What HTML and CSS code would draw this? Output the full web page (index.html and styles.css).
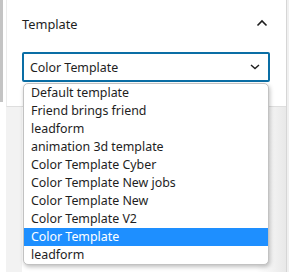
FILE: index.html
```html
<!DOCTYPE html>
<html lang="en">
<head>
    <meta charset="UTF-8">
    <meta name="viewport" content="width=device-width, initial-scale=1.0">
    <title>Template</title>
    <link rel="stylesheet" href="styles.css">
</head>
<body>
    <div class="sidebar">
        <div class="panel">
            <div class="panel-head">
                <h2>Template</h2>
                <svg class="chevron" width="12" height="8" viewBox="0 0 12 8">
                    <path d="M1.5 6.5 L6 2 L10.5 6.5" fill="none" stroke="#1e1e1e" stroke-width="1.6"/>
                </svg>
            </div>
            <div class="picker">
                <div class="select-box">
                    <span>Color Template</span>
                    <svg width="10" height="6" viewBox="0 0 10 6">
                        <path d="M1 1 L5 4.6 L9 1" fill="none" stroke="#1e1e1e" stroke-width="1.4"/>
                    </svg>
                </div>
                <ul class="options">
                    <li>Default template</li>
                    <li>Friend brings friend</li>
                    <li>leadform</li>
                    <li>animation 3d template</li>
                    <li>Color Template Cyber</li>
                    <li>Color Template New jobs</li>
                    <li>Color Template New</li>
                    <li>Color Template V2</li>
                    <li class="active">Color Template</li>
                    <li>leadform</li>
                </ul>
            </div>
        </div>
        <div class="below"></div>
    </div>
</body>
</html>
```

FILE: styles.css
```css
html, body {
    margin: 0;
    padding: 0;
    height: 100%;
}

body {
    font-family: "Noto Sans", "Open Sans", sans-serif;
    color: #1e1e1e;
    background-color: #f0f0f0;
    overflow: hidden;
}

.sidebar {
    height: 272px;
    width: 286px;
    background-color: #fff;
    border-right: 1px solid #d6d6d6;
    display: flex;
    flex-direction: column;
    position: relative;
}

.sidebar::before {
    content: "";
    position: absolute;
    left: 0;
    top: 0;
    width: 3px;
    height: 102px;
    background-color: #c4c4c4;
}

.panel {
    height: 106px;
    border-bottom: 1px solid #dedede;
    margin-left: 6px;
    border-left: 1px solid #ececec;
    padding: 0 16px 0 15px;
}

.panel-head {
    display: flex;
    justify-content: space-between;
    align-items: center;
    height: 46px;
}

.panel-head h2 {
    margin: 0;
    font-size: 12.8px;
    font-weight: 400;
    padding-top: 1px;
}

.chevron {
    margin-right: 2px;
    margin-bottom: 1px;
}

.picker {
    position: relative;
    margin-top: 6px;
}

.select-box {
    height: 26px;
    border: 2px solid #0a6ea5;
    border-radius: 2px;
    display: flex;
    align-items: center;
    justify-content: space-between;
    padding: 0 8px 0 6px;
    font-size: 12.4px;
}

.select-box span {
    padding-top: 1px;
}

.options {
    position: absolute;
    top: 31px;
    left: 1px;
    right: 1px;
    margin: 0;
    padding: 0;
    list-style: none;
    background-color: #fff;
    border: 1px solid #c2c2c2;
    border-radius: 5px;
    box-shadow: 1px 2px 4px rgba(0, 0, 0, 0.25);
    overflow: hidden;
    z-index: 2;
}

.options li {
    height: 18px;
    line-height: 18px;
    padding-left: 7px;
    font-size: 12.4px;
}

.options li.active {
    background-color: #1e8fff;
    color: #fff;
}

.below {
    flex: 1;
    margin-left: 6px;
    background: linear-gradient(to right, #f2f2f2 0, #f2f2f2 16px, #fff 16px, #fff 250px, #e8e8e8 100%);
}
```
